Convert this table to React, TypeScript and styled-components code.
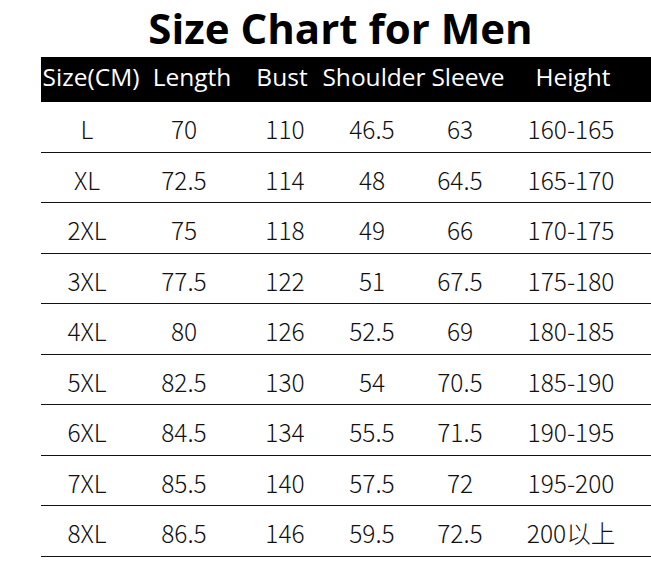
import React from "react";
import styled, { createGlobalStyle } from "styled-components";

const COLUMNS = [
  { id: "size", label: "Size(CM)", shift: 4 },
  { id: "length", label: "Length", shift: 8 },
  { id: "bust", label: "Bust", shift: -3 },
  { id: "shoulder", label: "Shoulder", shift: 2 },
  { id: "sleeve", label: "Sleeve", shift: 8 },
  { id: "height", label: "Height", shift: 2 },
];

const ROWS = [
  ["L", "70", "110", "46.5", "63", "160-165"],
  ["XL", "72.5", "114", "48", "64.5", "165-170"],
  ["2XL", "75", "118", "49", "66", "170-175"],
  ["3XL", "77.5", "122", "51", "67.5", "175-180"],
  ["4XL", "80", "126", "52.5", "69", "180-185"],
  ["5XL", "82.5", "130", "54", "70.5", "185-190"],
  ["6XL", "84.5", "134", "55.5", "71.5", "190-195"],
  ["7XL", "85.5", "140", "57.5", "72", "195-200"],
  ["8XL", "86.5", "146", "59.5", "72.5", "200以上"],
];

const GlobalStyle = createGlobalStyle`
  html, body {
    margin: 0;
    padding: 0;
    background: #fff;
  }
`;

const App: React.FC = () => {
  return (
    <>
      <GlobalStyle />
      <Page>
        <Title>Size Chart for Men</Title>
        <HeaderBar>
          {COLUMNS.map(({ id, label, shift }) => (
            <HeaderCell key={id} $shift={shift}>
              {label}
            </HeaderCell>
          ))}
        </HeaderBar>
        {ROWS.map((row) => (
          <Row key={row[0]}>
            {row.map((value, i) => (
              <Cell key={COLUMNS[i].id}>{value}</Cell>
            ))}
          </Row>
        ))}
      </Page>
    </>
  );
};

export default App;

const Page = styled.div`
  width: 651px;
  height: 567px;
  padding-left: 41px;
  box-sizing: border-box;
  overflow: hidden;
`;

const Title = styled.h1`
  margin: 0 0 1px;
  padding-right: 11px;
  height: 56px;
  line-height: 56px;
  text-align: center;
  font-family: "Open Sans", "Liberation Sans", sans-serif;
  font-weight: 700;
  font-size: 42px;
  color: #000;
  white-space: nowrap;
`;

const grid = `
  display: grid;
  grid-template-columns: 92px 102px 100px 74px 102px 120px 1fr;
`;

const HeaderBar = styled.div`
  ${grid}
  height: 45px;
  padding-bottom: 5px;
  box-sizing: border-box;
  background: #000;
  color: #fff;
  font-family: "Open Sans", "Liberation Sans", sans-serif;
  font-size: 24.5px;
  line-height: 40px;
`;

const HeaderCell = styled.div<{ $shift: number }>`
  display: flex;
  justify-content: center;
  white-space: nowrap;
  transform: translateX(${(p) => p.$shift}px);
`;

const Row = styled.div`
  ${grid}
  height: 50.5px;
  box-sizing: border-box;
  border-bottom: 1.5px solid #111;
`;

const Cell = styled.div`
  display: flex;
  justify-content: center;
  padding-top: 4px;
  line-height: 45px;
  font-family: "Noto Sans CJK SC", "Noto Sans", sans-serif;
  font-weight: 300;
  font-size: 24.5px;
  color: #111;
  white-space: nowrap;
`;
